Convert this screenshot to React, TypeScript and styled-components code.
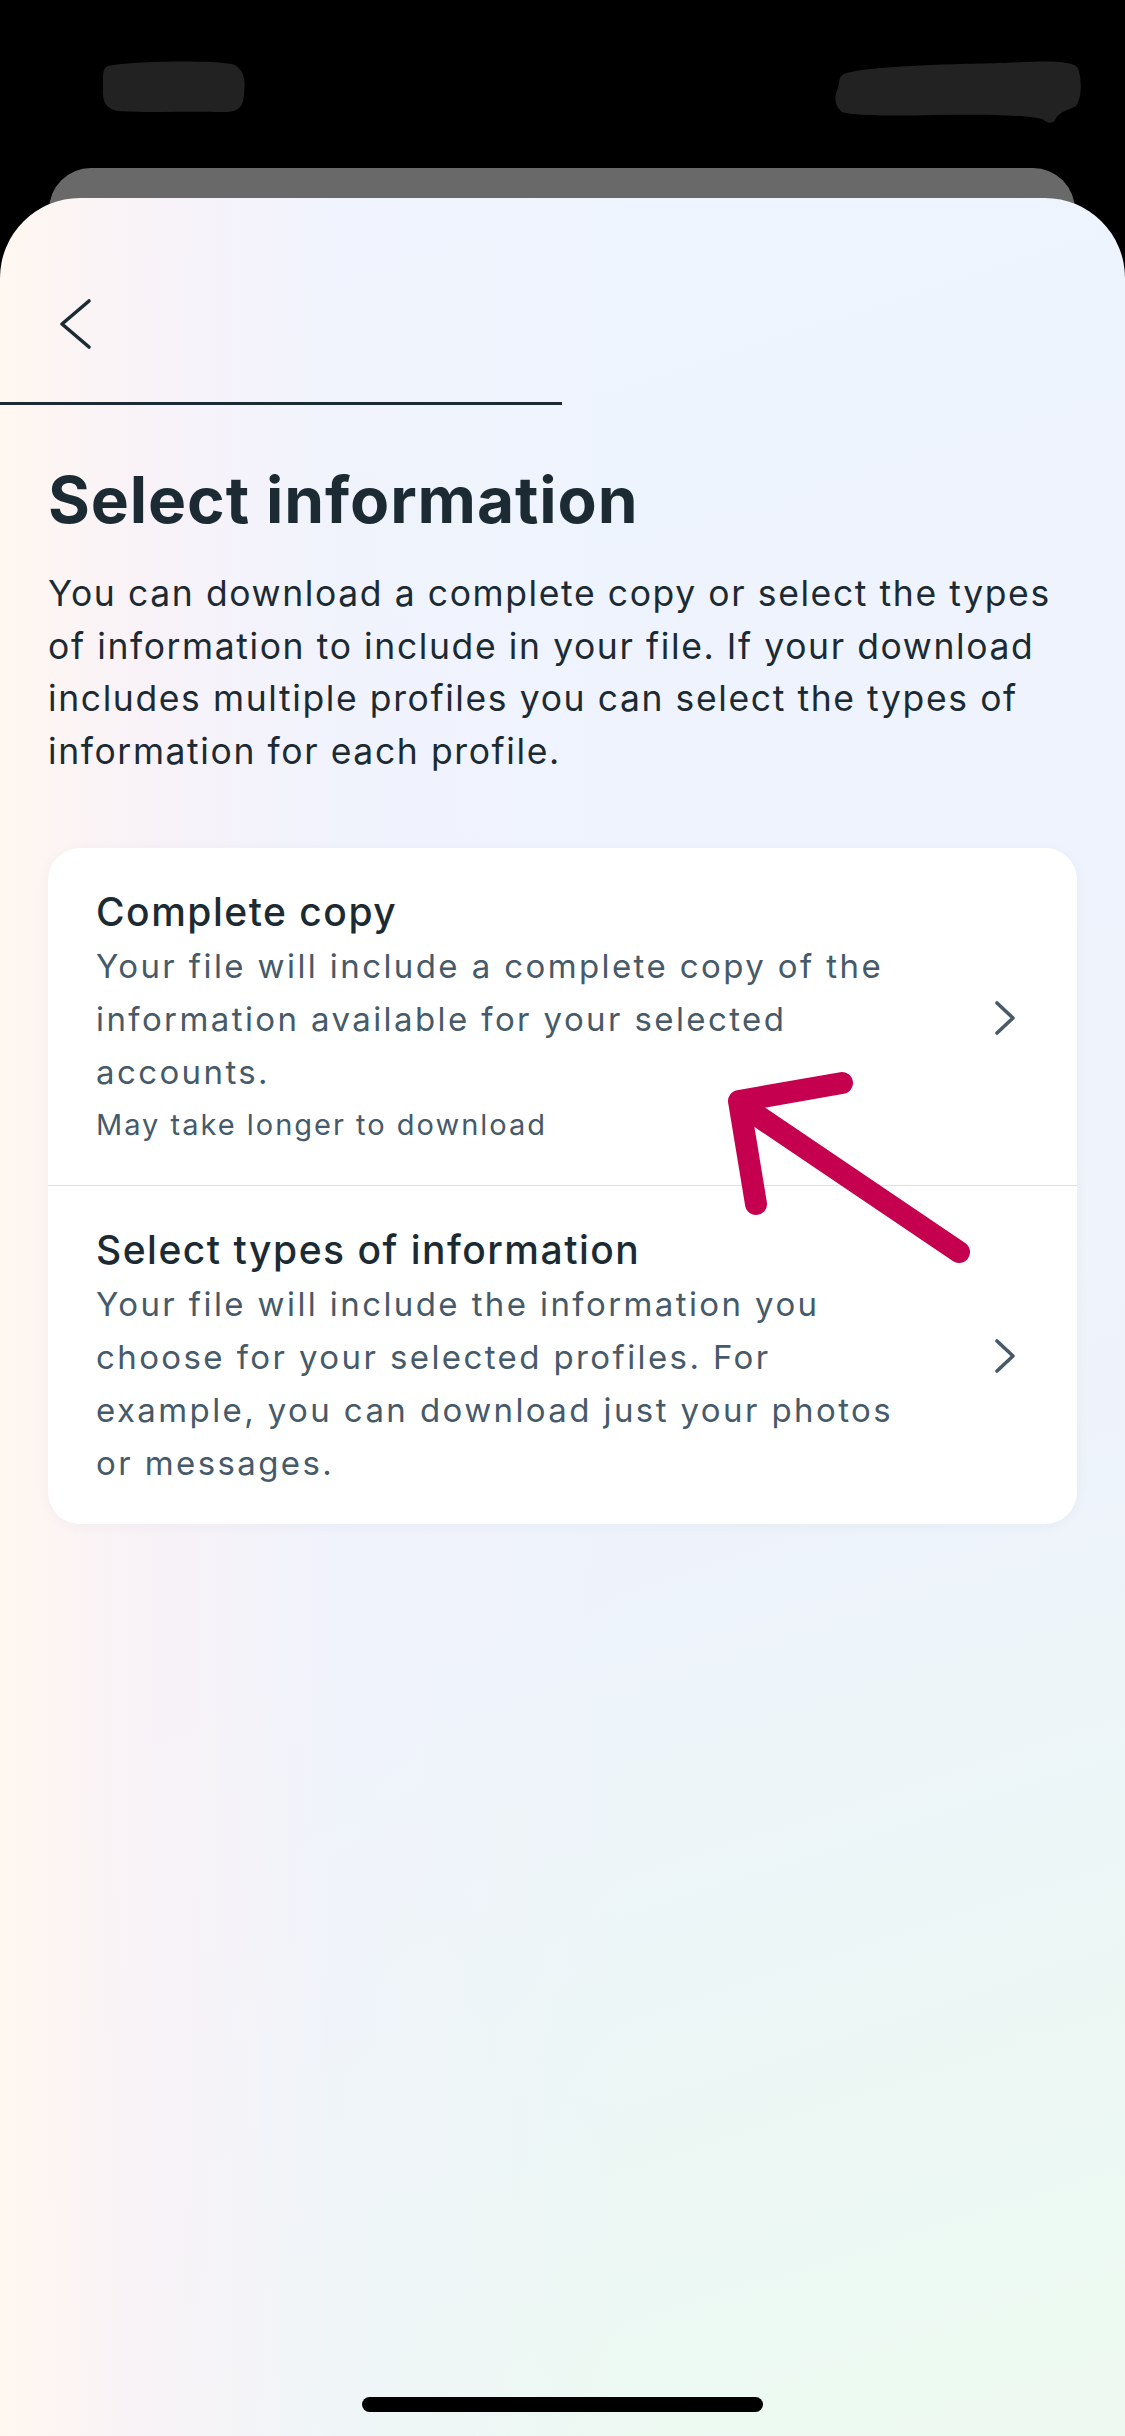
import React from "react";
import styled, { createGlobalStyle } from "styled-components";

const GlobalStyle = createGlobalStyle`
  html, body {
    margin: 0;
    padding: 0;
    background: #000;
  }
  body {
    font-family: Inter, "Noto Sans", "Liberation Sans", sans-serif;
    -webkit-font-smoothing: antialiased;
  }
  * { box-sizing: border-box; }
`;

const Screen = styled.div`
  position: relative;
  width: 1125px;
  min-height: 2436px;
  background: #000;
  display: flex;
  flex-direction: column;
  overflow: hidden;
`;

const StatusBar = styled.div`
  height: 168px;
  display: flex;
  justify-content: space-between;
  align-items: flex-start;
  padding: 60px 43px 0 100px;
`;

const BackSheet = styled.div`
  height: 70px;
  margin: 0 50px 0 49px;
  background: #696969;
  border-radius: 42px 42px 0 0;
`;

const Sheet = styled.div`
  margin-top: -40px;
  min-height: 2238px;
  border-radius: 80px 80px 0 0;
  background:
    linear-gradient(90deg, rgba(255, 247, 240, 1) 0%, rgba(250, 242, 247, 0.9) 12%, rgba(243, 242, 252, 0.45) 30%, rgba(238, 244, 254, 0) 55%),
    linear-gradient(162deg, #eef5fe 0%, #eef3fd 40%, #eef3fb 60%, #ecf7f5 82%, #edfaf0 100%);
  display: flex;
  flex-direction: column;
`;

const Header = styled.div`
  padding: 100px 0 0 58px;
  height: 204px;
`;

const BackButton = styled.button`
  display: block;
  border: none;
  background: transparent;
  padding: 0;
  width: 36px;
  height: 52px;
  cursor: pointer;
`;

const Progress = styled.div`
  width: 562px;
  height: 3px;
  background: #1c2b33;
`;

const Content = styled.div`
  padding: 56px 48px 0;
  display: flex;
  flex-direction: column;
`;

const Title = styled.h1`
  margin: 0;
  font-size: 64px;
  line-height: 78px;
  font-weight: 700;
  color: #1c2b33;
  letter-spacing: 0.9px;
`;

const Lead = styled.p`
  margin: 29px 0 0;
  font-size: 35.5px;
  line-height: 52.5px;
  font-weight: 400;
  color: #1c2b33;
  letter-spacing: 1.6px;
`;

const Card = styled.div`
  margin-top: 70px;
  background: #fff;
  border-radius: 32px;
  box-shadow: 0 2px 14px rgba(40, 40, 80, 0.04);
  overflow: hidden;
`;

const Option = styled.button<{ $divider?: boolean }>`
  width: 100%;
  display: flex;
  align-items: center;
  gap: 78px;
  padding: 36px 60px 34px 48px;
  border: none;
  background: transparent;
  text-align: left;
  font-family: inherit;
  cursor: pointer;
  border-top: ${(p) => (p.$divider ? "1.5px solid #dde1e6" : "none")};
`;

const OptionText = styled.div`
  flex: 1;
  display: flex;
  flex-direction: column;
`;

const OptionTitle = styled.div`
  font-size: 39px;
  line-height: 56px;
  font-weight: 500;
  color: #1c2b33;
  letter-spacing: 1.5px;
`;

const OptionDesc = styled.div`
  font-size: 33px;
  line-height: 53px;
  color: #465a69;
  letter-spacing: 2.4px;
`;

const OptionNote = styled.div`
  font-size: 29px;
  line-height: 52px;
  color: #465a69;
  letter-spacing: 2px;
`;

const ChevronBox = styled.span`
  width: 24px;
  height: 34px;
  flex: none;
  display: flex;
  align-items: center;
  justify-content: center;
`;

const HomeIndicator = styled.div`
  margin: auto auto 24px;
  width: 401px;
  height: 15px;
  border-radius: 8px;
  background: #000;
`;

const Annotation = styled.svg`
  position: absolute;
  left: 0;
  top: 0;
  width: 1125px;
  height: 2436px;
  pointer-events: none;
`;

const Chevron = () => (
  <ChevronBox>
    <svg width="24" height="34" viewBox="0 0 24 34" fill="none">
      <path d="M4 2 L20 17 L4 32" stroke="#465a69" strokeWidth="3.6" strokeLinecap="round" strokeLinejoin="round" />
    </svg>
  </ChevronBox>
);

export default function App() {
  return (
    <>
      <GlobalStyle />
      <Screen>
        <StatusBar>
          <svg width="146" height="54" viewBox="0 0 146 54">
            <path d="M8 6 C30 1 110 0 132 4 C144 8 146 20 144 34 C143 48 138 53 120 52 C90 51 40 53 18 51 C6 49 2 42 3 28 C3 16 2 8 8 6 Z" fill="#222" />
          </svg>
          <svg width="248" height="66" viewBox="0 0 248 66">
            <path d="M10 14 C30 6 120 4 170 3 C210 1 238 0 244 8 C248 20 248 38 242 46 C234 50 226 52 222 58 C220 64 214 64 210 60 C200 55 150 54 100 55 C60 56 20 56 8 52 C0 46 0 36 4 28 C6 22 4 17 10 14 Z" fill="#222" />
          </svg>
        </StatusBar>
        <BackSheet />
        <Sheet>
          <Header>
            <BackButton aria-label="Back">
              <svg width="36" height="52" viewBox="0 0 36 52" fill="none">
                <path d="M31 3 L4 26 L31 49" stroke="#1c2b33" strokeWidth="3.6" strokeLinecap="round" strokeLinejoin="round" />
              </svg>
            </BackButton>
          </Header>
          <Progress />
          <Content>
            <Title>Select information</Title>
            <Lead>
              You can download a complete copy or select the types of information to include in your file. If your
              download includes multiple profiles you can select the types of information for each profile.
            </Lead>
            <Card>
              <Option>
                <OptionText>
                  <OptionTitle>Complete copy</OptionTitle>
                  <OptionDesc>
                    Your file will include a complete copy of the information available for your selected accounts.
                  </OptionDesc>
                  <OptionNote>May take longer to download</OptionNote>
                </OptionText>
                <Chevron />
              </Option>
              <Option $divider>
                <OptionText>
                  <OptionTitle>Select types of information</OptionTitle>
                  <OptionDesc>
                    Your file will include the information you choose for your selected profiles. For example, you can
                    download just your photos or messages.
                  </OptionDesc>
                </OptionText>
                <Chevron />
              </Option>
            </Card>
          </Content>
          <HomeIndicator />
        </Sheet>
        <Annotation viewBox="0 0 1125 2436">
          <g stroke="#c4004f" strokeWidth="22" strokeLinecap="round" strokeLinejoin="round" fill="none">
            <path d="M959 1252 L746 1108" />
            <path d="M842 1083 L739 1101 L756 1204" />
          </g>
        </Annotation>
      </Screen>
    </>
  );
}
